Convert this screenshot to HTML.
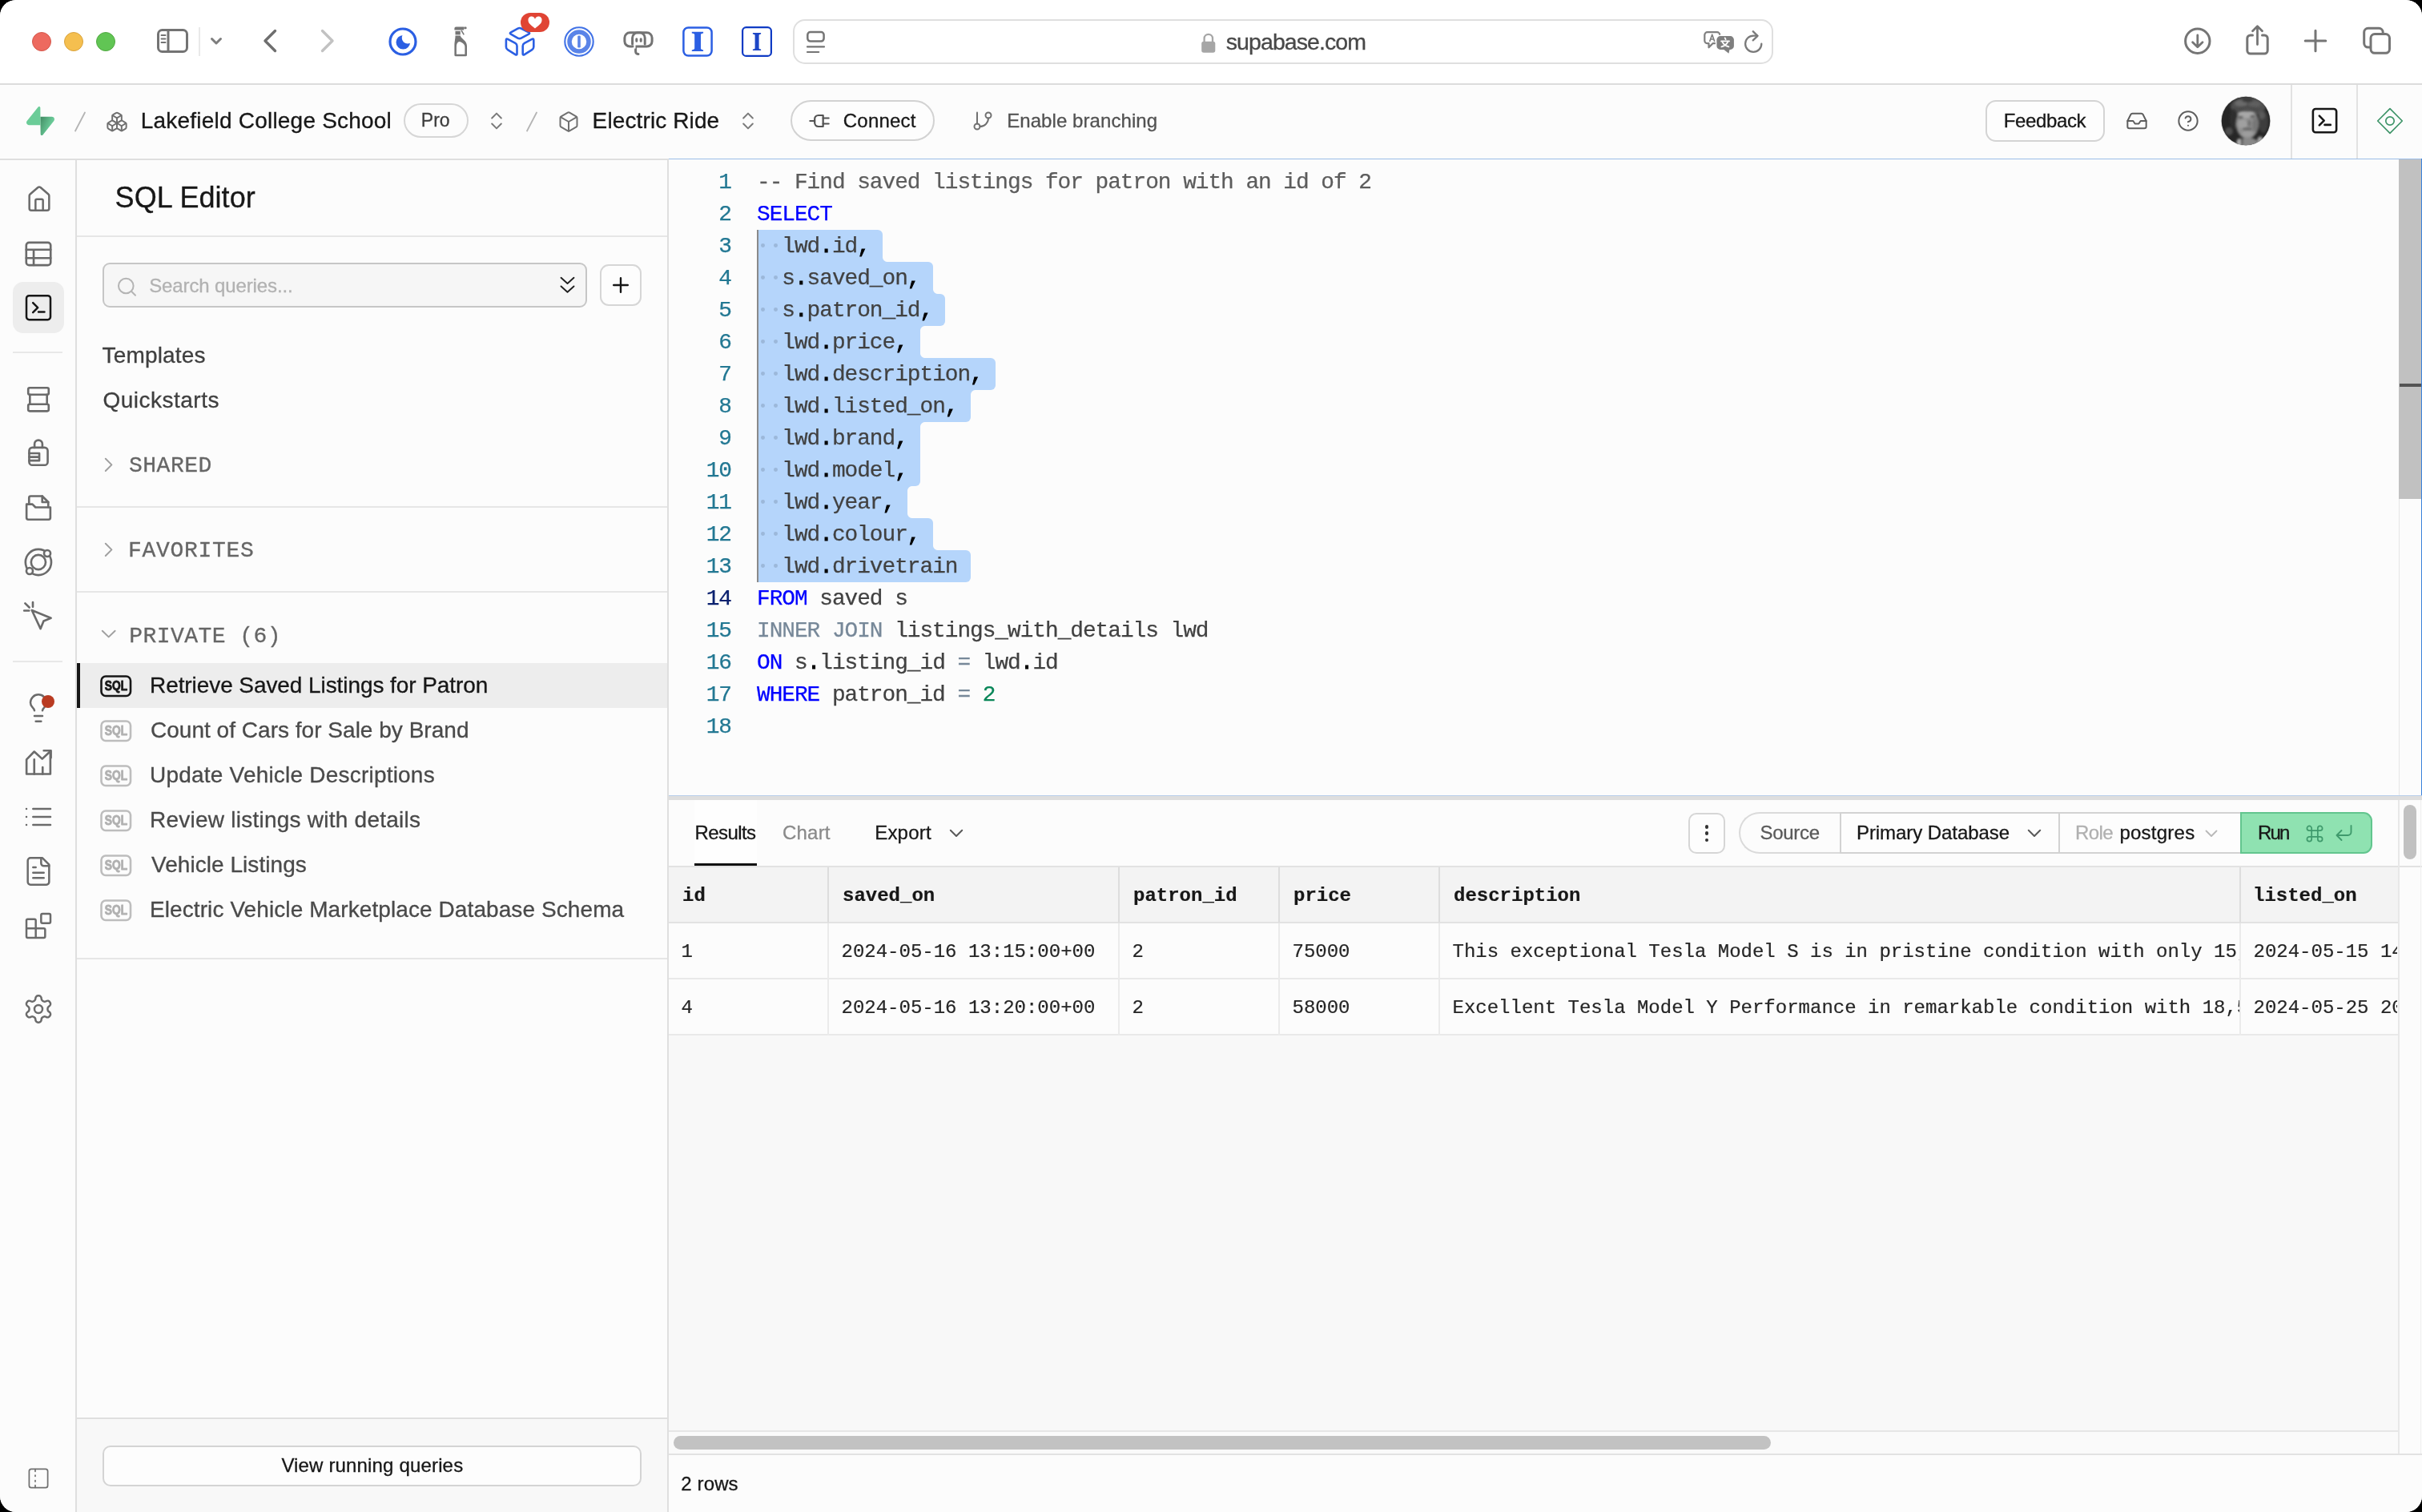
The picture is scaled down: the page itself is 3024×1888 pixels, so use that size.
<!DOCTYPE html>
<html>
<head>
<meta charset="utf-8">
<title>SQL Editor</title>
<style>
*{box-sizing:border-box;margin:0;padding:0}
html,body{width:3024px;height:1888px;overflow:hidden;background:#000;}
body{font-family:"Liberation Sans",sans-serif;color:#171717;-webkit-font-smoothing:antialiased}
#win{position:absolute;left:0;top:0;width:3024px;height:1888px;background:#fcfcfc;border-radius:20px;overflow:hidden;will-change:transform}
.a{position:absolute}
.t{position:absolute;white-space:pre;line-height:1;-webkit-text-stroke:0.3px currentColor}
.m{font-family:"Liberation Mono",monospace}
svg{position:absolute;overflow:visible}
.ic{fill:none;stroke:#6b6b6b;stroke-width:2;stroke-linecap:round;stroke-linejoin:round}
/* safari toolbar */
#sbar{left:0;top:0;width:3024px;height:104px;background:#fff}
#sbarb{left:0;top:104px;width:3024px;height:2px;background:#dcdcdc}
/* app header */
#hdr{left:0;top:106px;width:3024px;height:92px;background:#fcfcfc}
#hdrb{left:0;top:198px;width:3024px;height:2px;background:#dfdfdf}
/* left rail */
#rail{left:0;top:200px;width:94px;height:1688px;background:#fcfcfc}
#railb{left:94px;top:200px;width:2px;height:1688px;background:#dfdfdf}
/* sql panel */
#panel{left:96px;top:200px;width:737px;height:1688px;background:#fcfcfc}
#panelb{left:833px;top:200px;width:2px;height:1688px;background:#dfdfdf}
.hl{position:absolute;left:96px;width:737px;height:2px;background:#e6e6e6}
/* editor */
#ed{left:835px;top:198px;width:2189px;height:798px;background:#fcfcfc}
.ln{position:absolute;left:835px;width:78px;text-align:right;font-family:"Liberation Mono",monospace;font-size:26.1px;line-height:40px;height:40px;color:#237893;white-space:pre}
.cl{position:absolute;left:946px;font-family:"Liberation Mono",monospace;font-size:26.1px;line-height:40px;height:40px;color:#3b3b3b;white-space:pre}
.sel{position:absolute;left:946px;height:40px;background:#b5d5fb}
.kw{color:#0000ff}.cm{color:#5c5c5c}.gr{color:#778899}.nu{color:#098658}.ws{color:#9bb7d9}
/* results */
.th{position:absolute;top:1083px;height:69px;background:#f3f3f3}
.cell{position:absolute;font-family:"Liberation Mono",monospace;font-size:24px;line-height:1;white-space:pre;color:#262626;-webkit-text-stroke:0.2px currentColor}
.hd{font-weight:bold;color:#171717}
.vl{position:absolute;width:2px;background:#e4e4e4}
</style>
</head>
<body>
<div id="win">
<!-- ===== Safari toolbar ===== -->
<div class="a" id="sbar"></div>
<div class="a" id="sbarb"></div>
<div class="a" style="left:40px;top:40px;width:24px;height:24px;border-radius:50%;background:#ed6a5f;border:1px solid #d5584c"></div>
<div class="a" style="left:80px;top:40px;width:24px;height:24px;border-radius:50%;background:#f5bf4f;border:1px solid #d9a33e"></div>
<div class="a" style="left:120px;top:40px;width:24px;height:24px;border-radius:50%;background:#61c554;border:1px solid #51a942"></div>
<!-- sidebar toggle -->
<svg style="left:196px;top:36px" width="39" height="30" viewBox="0 0 39 30"><rect x="1.5" y="1.5" width="36" height="27" rx="5" fill="none" stroke="#737373" stroke-width="3"/><path d="M14 2v26" stroke="#737373" stroke-width="3"/><path d="M5.5 8h5M5.5 12.5h5M5.5 17h5" stroke="#737373" stroke-width="2" stroke-linecap="round"/></svg>
<div class="a" style="left:248px;top:34px;width:2px;height:36px;background:#e9e9e9"></div>
<svg style="left:263px;top:47px" width="14" height="9" viewBox="0 0 14 9"><path d="M1.5 1.5l5.5 5.5l5.5-5.5" fill="none" stroke="#7d7d7d" stroke-width="3" stroke-linecap="round" stroke-linejoin="round"/></svg>
<svg style="left:328px;top:36px" width="18" height="30" viewBox="0 0 18 30"><path d="M15.5 2.5L3 15l12.5 12.5" fill="none" stroke="#6e6e6e" stroke-width="3.4" stroke-linecap="round" stroke-linejoin="round"/></svg>
<svg style="left:400px;top:36px" width="18" height="30" viewBox="0 0 18 30"><path d="M2.5 2.5L15 15L2.5 27.5" fill="none" stroke="#c2c2c2" stroke-width="3.4" stroke-linecap="round" stroke-linejoin="round"/></svg>
<!-- moon ext -->
<svg style="left:485px;top:34px" width="36" height="36" viewBox="0 0 36 36"><defs><mask id="mm"><rect width="36" height="36" fill="#fff"/><circle cx="24" cy="13.400" r="7.200" fill="#000"/></mask></defs><circle cx="18" cy="18" r="16" fill="none" stroke="#2b5fe3" stroke-width="3.200"/><circle cx="18.300" cy="18.700" r="8.800" fill="#2b5fe3" mask="url(#mm)"/></svg>
<!-- spray bottle -->
<svg style="left:566px;top:33px" width="18" height="38" viewBox="0 0 18 38"><g fill="#757575"><path d="M1.400 2.400a2 2 0 0 1 2-2h9.800v4.200H1.400z"/><rect x="13.200" y="0.400" width="3.400" height="2.800" rx="1"/><rect x="2.500" y="5.800" width="6.300" height="4.600"/><path d="M2.500 11.400H8.800C9.600 15.600 17 17.200 17 24.500V35.700a1.500 1.500 0 0 1-1.500 1.500H2.900a1.500 1.500 0 0 1-1.500-1.500V24C1.400 18.500 2.500 16 2.500 11.400z"/></g><path d="M3.900 34.800V25.500C3.900 22 5 20.700 6 19.600C7.300 18.900 8.200 18.900 9.400 19.600C11.500 20.800 14.400 22.200 14.400 25.500V34.800Z" fill="#fff"/><path d="M10 5l3.300 5.400" stroke="#757575" stroke-width="1.500"/></svg>
<!-- cube ext -->
<svg style="left:630px;top:33px" width="38" height="38" viewBox="0 0 38 38"><g fill="none" stroke="#2b5fe3" stroke-width="2.600" stroke-linejoin="round"><path d="M16.50 2.56Q18.60 1.40 20.73 2.51L30.07 7.39Q32.20 8.50 30.08 9.62L20.72 14.58Q18.60 15.70 16.51 14.52L7.89 9.68Q5.80 8.50 7.90 7.34Z"/><path d="M1.90 17.20Q1.90 14.80 4.01 15.94L13.39 20.96Q15.50 22.10 15.50 24.50L15.50 34.00Q15.50 36.40 13.46 35.13L3.94 29.17Q1.90 27.90 1.90 25.50Z"/><path d="M22.70 24.50Q22.70 22.10 24.81 20.96L34.19 15.94Q36.30 14.80 36.30 17.20L36.30 25.50Q36.30 27.90 34.26 29.17L24.74 35.13Q22.70 36.40 22.70 34.00Z"/></g></svg>
<div class="a" style="left:650px;top:16px;width:36px;height:24px;border-radius:12px;background:#e04434"></div>
<svg style="left:659px;top:21px" width="18" height="15" viewBox="0 0 18 15"><path d="M9 14.500C4 10.500 0.500 8 0.500 4.500A4 4 0 0 1 9 3A4 4 0 0 1 17.500 4.500C17.500 8 14 10.500 9 14.500z" fill="#fff"/></svg>
<!-- 1password -->
<svg style="left:704px;top:33px" width="38" height="38" viewBox="0 0 38 38"><circle cx="19" cy="19" r="17.700" fill="none" stroke="#4172e6" stroke-width="2.100"/><circle cx="19" cy="19" r="12" fill="none" stroke="#5a84e8" stroke-width="5.500"/><rect x="17.200" y="11.500" width="3.600" height="15" rx="1.200" fill="#5a84e8"/></svg>
<!-- elephant -->
<svg style="left:778px;top:38px" width="38" height="32" viewBox="0 0 38 32"><g fill="none" stroke="#737373" stroke-width="3" stroke-linecap="round" stroke-linejoin="round"><rect x="1.900" y="2.800" width="34.200" height="17.200" rx="6.500"/><path d="M11.600 17V9.300a6.500 6.500 0 0 1 6.500-6.500h2.600a6.500 6.500 0 0 1 6.500 6.500V17"/><path d="M15.600 20.500v5.700a3.400 3.400 0 0 0 3.400 3.400"/><path d="M16.800 10.800v2.400M22.200 10.800v2.400"/></g><rect x="13.300" y="17.600" width="2.200" height="5" fill="#fff"/><rect x="11.700" y="21.500" width="2.400" height="2" fill="#fff"/></svg>
<!-- I boxes -->
<svg style="left:852px;top:33px" width="38" height="38" viewBox="0 0 38 38"><rect x="1.400" y="1.400" width="35.200" height="35.200" rx="6" fill="none" stroke="#2b5fe3" stroke-width="2.500"/><path d="M11.8 6.8H26.1V8.5Q23.32 8.70 23 10.1V27.8Q23.32 29.20 26.1 29.400000000000002V31.1H11.8V29.400000000000002Q14.88 29.20 15.2 27.8V10.1Q14.88 8.70 11.8 8.5Z" fill="#2b5fe3"/></svg>
<svg style="left:926px;top:33px" width="38" height="38" viewBox="0 0 38 38"><rect x="1.100" y="1.100" width="35.800" height="35.800" rx="4.500" fill="none" stroke="#0f3bc4" stroke-width="2.200"/><path d="M13.9 8.1H24.1V9.5Q21.84 9.70 21.6 10.7V27.400000000000002Q21.84 28.40 24.1 28.6V30H13.9V28.6Q16.36 28.40 16.6 27.400000000000002V10.7Q16.36 9.70 13.9 9.5Z" fill="#1d46c6"/></svg>
<!-- URL bar -->
<div class="a" style="left:990px;top:24px;width:1224px;height:56px;border:2px solid #dfdfdf;border-radius:15px;background:#fff"></div>
<svg style="left:1006px;top:38px" width="25" height="29" viewBox="0 0 25 29"><rect x="2.300" y="2.100" width="20.300" height="11.400" rx="3.400" fill="none" stroke="#757575" stroke-width="2.500"/><path d="M2 20.400h21M2 27h14.200" stroke="#757575" stroke-width="2.200" stroke-linecap="round"/></svg>
<svg style="left:1499px;top:40px" width="20" height="27" viewBox="0 0 20 27"><path d="M4.600 12.500V8a5.200 5.200 0 0 1 10.400 0v4.500" fill="none" stroke="#a6a6a6" stroke-width="2.300"/><rect x="1.200" y="11.700" width="17.100" height="14.100" rx="2.800" fill="#a6a6a6"/></svg>
<span class="t" id="s_url" style="left:1530.8px;top:37.8px;font-size:28.5px;color:#484848;letter-spacing:-0.93px;">supabase.com</span>
<!-- translate -->
<svg style="left:2126px;top:38px" width="40" height="30" viewBox="0 0 40 30"><path d="M12.500 16.200L7.500 21.300V16.200H5.800a3.500 3.500 0 0 1-3.500-3.500V5.700a3.500 3.500 0 0 1 3.500-3.500h12a3.500 3.500 0 0 1 3.500 3.500v7a3.500 3.500 0 0 1-3.500 3.500z" fill="#fff" stroke="#7f7f7f" stroke-width="2.200" stroke-linejoin="round"/><path d="M8.600 14l3.100-8.800l3.100 8.800M9.700 11h4" fill="none" stroke="#7f7f7f" stroke-width="1.700" stroke-linejoin="round"/><path d="M21.900 5.600h12.500a6 6 0 0 1 6 6v7.800a6 6 0 0 1-6 6h-0.500l-1 5l-6-5h-5a6 6 0 0 1-6-6v-7.800a6 6 0 0 1 6-6z" fill="#fff"/><path d="M21.900 7.100h12.500a4.500 4.500 0 0 1 4.500 4.500v7.800a4.500 4.500 0 0 1-4.500 4.500h-0.900l-1.100 4.900l-6-4.900h-4.500a4.500 4.500 0 0 1-4.500-4.500v-7.800a4.500 4.500 0 0 1 4.500-4.500z" fill="#7f7f7f"/><path d="M27.700 9.400l0.900 1.700M23.100 13.400h9.900M24.400 14.400c1.500 3 4.500 5 8 6M31.300 14.400c-1.500 3-4.500 5-7.900 6" fill="none" stroke="#fff" stroke-width="1.800" stroke-linecap="round"/></svg>
<svg style="left:2177px;top:37px" width="26" height="31" viewBox="0 0 26 31"><path d="M22.300 17.700A10.100 10.100 0 1 1 12.200 7.600h5" fill="none" stroke="#7a7a7a" stroke-width="2.300" stroke-linecap="round"/><path d="M11.700 2.200l5.800 5.600l-5.800 5.600" fill="none" stroke="#7a7a7a" stroke-width="2.300" stroke-linecap="round" stroke-linejoin="round"/></svg>
<!-- right icons -->
<svg style="left:2726px;top:34px" width="36" height="36" viewBox="0 0 36 36"><circle cx="17.800" cy="17.300" r="15.200" fill="none" stroke="#757575" stroke-width="3"/><path d="M17.800 10v14.500M11.600 18.800l6.200 6l6.200-6" fill="none" stroke="#757575" stroke-width="2.800" stroke-linecap="round" stroke-linejoin="round"/></svg>
<svg style="left:2803px;top:30px" width="32" height="40" viewBox="0 0 32 40"><path d="M9.500 14H6.800a4 4 0 0 0-4 4v15a4 4 0 0 0 4 4h17.400a4 4 0 0 0 4-4V18a4 4 0 0 0-4-4h-2.700" fill="none" stroke="#757575" stroke-width="3" stroke-linecap="round"/><path d="M15.500 25.500V3.500M9.500 8.800L15.500 2.800l6 6" fill="none" stroke="#757575" stroke-width="2.800" stroke-linecap="round" stroke-linejoin="round"/></svg>
<svg style="left:2877px;top:37px" width="28" height="28" viewBox="0 0 28 28"><path d="M14 1.200v25.600M1.200 14h25.600" stroke="#757575" stroke-width="3" stroke-linecap="round"/></svg>
<svg style="left:2949px;top:32px" width="38" height="38" viewBox="0 0 38 38"><rect x="2.700" y="3.300" width="23.500" height="23.800" rx="5" fill="#fff" stroke="#757575" stroke-width="3"/><rect x="11" y="10.500" width="23.500" height="23.800" rx="5" fill="#fff" stroke="#757575" stroke-width="3"/></svg>


<!-- ===== App header ===== -->
<div class="a" id="hdr"></div>
<div class="a" id="hdrb"></div>
<svg style="left:32.500px;top:132.800px" width="35" height="36.300" viewBox="0 0 109 113"><defs><linearGradient id="lg0" x1="53.974" y1="54.974" x2="94.164" y2="71.830" gradientUnits="userSpaceOnUse"><stop stop-color="#47946a"/><stop offset="1" stop-color="#69c997"/></linearGradient><linearGradient id="lg1" x1="36.156" y1="30.578" x2="54.484" y2="65.081" gradientUnits="userSpaceOnUse"><stop/><stop offset="1" stop-opacity="0"/></linearGradient></defs><path d="M63.708 110.284C60.848 113.885 55.050 111.912 54.981 107.314L53.974 40.063L99.194 40.063C107.384 40.063 111.952 49.523 106.859 55.937L63.708 110.284Z" fill="url(#lg0)"/><path d="M63.708 110.284C60.848 113.885 55.050 111.912 54.981 107.314L53.974 40.063L99.194 40.063C107.384 40.063 111.952 49.523 106.859 55.937L63.708 110.284Z" fill="url(#lg1)" fill-opacity="0.08"/><path d="M45.317 2.071C48.177 -1.530 53.975 0.443 54.043 5.041L54.485 72.292H9.831C1.640 72.292 -2.928 62.832 2.166 56.418L45.317 2.071Z" fill="#6bcc98"/></svg>
<svg style="left:92px;top:139px" width="16" height="26" viewBox="0 0 16 26"><path d="M14 1.500L2 24.500" stroke="#b4b4b4" stroke-width="1.800" stroke-linecap="round"/></svg>
<svg class="ic" style="left:132px;top:138px;stroke:#707070;stroke-width:1.700" width="28" height="28" viewBox="0 0 24 24"><path d="M2.970 12.920A2 2 0 0 0 2 14.630v3.240a2 2 0 0 0 .970 1.710l3 1.800a2 2 0 0 0 2.060 0L12 19v-5.500l-5-3-4.030 2.420Z"/><path d="m7 16.500-4.740-2.850"/><path d="m7 16.500 5-3"/><path d="M7 16.500v5.170"/><path d="M12 13.500V19l3.970 2.380a2 2 0 0 0 2.060 0l3-1.800a2 2 0 0 0 .970-1.710v-3.240a2 2 0 0 0-.970-1.710L17 10.500l-5 3Z"/><path d="m17 16.500-5-3"/><path d="m17 16.500 4.740-2.850"/><path d="M17 16.500v5.170"/><path d="M7.970 4.420A2 2 0 0 0 7 6.130v4.370l5 3 5-3V6.130a2 2 0 0 0-.970-1.710l-3-1.800a2 2 0 0 0-2.060 0l-3 1.800Z"/><path d="M12 8 7.260 5.150"/><path d="m12 8 4.740-2.850"/><path d="M12 13.500V8"/></svg>
<span class="t" id="h_org" style="left:175.8px;top:137.1px;font-size:28px;color:#171717;letter-spacing:0.21px;">Lakefield College School</span>
<div class="a" style="left:504px;top:129px;width:81px;height:43px;border:2px solid #d6d6d6;border-radius:22px;background:#fcfcfc"></div>
<span class="t" id="h_pro" style="left:525.8px;top:139.0px;font-size:23px;color:#3d3d3d;letter-spacing:-0.01px;">Pro</span>
<svg class="ic" style="left:606px;top:137px;stroke:#7a7a7a;stroke-width:1.700" width="28" height="28" viewBox="0 0 24 24"><path d="m7 15 5 5 5-5"/><path d="m7 9 5-5 5 5"/></svg>
<svg style="left:656px;top:139px" width="16" height="26" viewBox="0 0 16 26"><path d="M14 1.500L2 24.500" stroke="#b4b4b4" stroke-width="1.800" stroke-linecap="round"/></svg>
<svg class="ic" style="left:696px;top:138px;stroke:#707070;stroke-width:1.700" width="28" height="28" viewBox="0 0 24 24"><path d="M21 8a2 2 0 0 0-1-1.730l-7-4a2 2 0 0 0-2 0l-7 4A2 2 0 0 0 3 8v8a2 2 0 0 0 1 1.730l7 4a2 2 0 0 0 2 0l7-4A2 2 0 0 0 21 16Z"/><path d="m3.300 7 8.700 5 8.700-5"/><path d="M12 22V12"/></svg>
<span class="t" id="h_proj" style="left:739.6px;top:137.0px;font-size:28px;color:#171717;letter-spacing:0.12px;">Electric Ride</span>
<svg class="ic" style="left:920px;top:137px;stroke:#7a7a7a;stroke-width:1.700" width="28" height="28" viewBox="0 0 24 24"><path d="m7 15 5 5 5-5"/><path d="m7 9 5-5 5 5"/></svg>
<div class="a" style="left:987px;top:125px;width:180px;height:51px;border:2px solid #d2d2d2;border-radius:26px;background:#fdfdfd"></div>
<svg class="ic" style="left:1009px;top:137px;stroke:#525252;stroke-width:1.900" width="28" height="28" viewBox="0 0 24 24"><g transform="rotate(90 12 12)"><path d="M12 22v-5"/><path d="M9 8V2"/><path d="M15 8V2"/><path d="M18 8v5a4 4 0 0 1-4 4h-4a4 4 0 0 1-4-4V8Z"/></g></svg>
<span class="t" id="h_connect" style="left:1052.8px;top:139.1px;font-size:24px;color:#171717;letter-spacing:0.22px;">Connect</span>
<svg class="ic" style="left:1213px;top:137px;stroke:#707070;stroke-width:1.700" width="28" height="28" viewBox="0 0 24 24"><line x1="6" x2="6" y1="3" y2="15"/><circle cx="18" cy="6" r="3"/><circle cx="6" cy="18" r="3"/><path d="M18 9a9 9 0 0 1-9 9"/></svg>
<span class="t" id="h_branch" style="left:1257.2px;top:139.1px;font-size:24px;color:#525252;letter-spacing:0.07px;">Enable branching</span>
<div class="a" style="left:2479px;top:125px;width:149px;height:52px;border:2px solid #d4d4d4;border-radius:13px;background:#fdfdfd"></div>
<span class="t" id="h_feedback" style="left:2501.8px;top:138.7px;font-size:24px;color:#171717;letter-spacing:-0.37px;">Feedback</span>
<svg class="ic" style="left:2654px;top:137px;stroke:#5e5e5e;stroke-width:1.700" width="28" height="28" viewBox="0 0 24 24"><polyline points="22 12 16 12 14 15 10 15 8 12 2 12"/><path d="M5.450 5.110 2 12v6a2 2 0 0 0 2 2h16a2 2 0 0 0 2-2v-6l-3.450-6.890A2 2 0 0 0 16.760 4H7.240a2 2 0 0 0-1.790 1.110z"/></svg>
<svg class="ic" style="left:2718px;top:137px;stroke:#5e5e5e;stroke-width:1.700" width="28" height="28" viewBox="0 0 24 24"><circle cx="12" cy="12" r="10"/><path d="M9.090 9a3 3 0 0 1 5.830 1c0 2-3 3-3 3"/><path d="M12 17h.010"/></svg>
<svg style="left:2772px;top:119px" width="64" height="64" viewBox="-1 -1 64 64"><defs><clipPath id="avc"><circle cx="31" cy="31" r="30.300"/></clipPath><filter id="avb" x="-20%" y="-20%" width="140%" height="140%"><feGaussianBlur stdDeviation="1.500"/></filter></defs><circle cx="31" cy="31" r="31.200" fill="#dcdcdc"/><g clip-path="url(#avc)"><rect x="-1" y="-1" width="64" height="64" fill="#262626"/><g filter="url(#avb)"><ellipse cx="34" cy="13" rx="22" ry="12" fill="#4f4f4f"/><ellipse cx="25" cy="9" rx="8" ry="4" fill="#6a6a6a"/><ellipse cx="42" cy="10" rx="8" ry="4" fill="#5e5e5e"/><ellipse cx="33" cy="5" rx="7" ry="3" fill="#3a3a3a"/><ellipse cx="16" cy="28" rx="5" ry="12" fill="#2f2f2f"/><ellipse cx="53" cy="32" rx="6" ry="14" fill="#3c3c3c"/><ellipse cx="51" cy="24" rx="4" ry="5" fill="#5a5a5a"/><ellipse cx="10" cy="44" rx="5" ry="5" fill="#4e4e4e"/><ellipse cx="33" cy="35" rx="14" ry="18.500" fill="#8f8f8f"/><ellipse cx="31" cy="23" rx="10" ry="4.500" fill="#a8a8a8"/><ellipse cx="27" cy="35" rx="6" ry="6" fill="#a0a0a0"/><ellipse cx="43" cy="36" rx="4" ry="9" fill="#777"/><ellipse cx="33" cy="47" rx="7" ry="4" fill="#9d9d9d"/><ellipse cx="34" cy="58" rx="12" ry="6" fill="#888"/><ellipse cx="23" cy="58" rx="3.500" ry="5" fill="#b4b4b4"/><ellipse cx="49" cy="55" rx="3.500" ry="4.500" fill="#a8a8a8"/><ellipse cx="26" cy="57" rx="1.200" ry="5" fill="#3a3a3a"/></g><g filter="url(#avb)" opacity="0.900"><ellipse cx="24.500" cy="26.500" rx="3.200" ry="1.300" fill="#4a4a4a"/><ellipse cx="39.500" cy="25.500" rx="3.200" ry="1.300" fill="#4a4a4a"/><ellipse cx="35.500" cy="34" rx="1.800" ry="4" fill="#6c6c6c"/><ellipse cx="33" cy="41" rx="6.500" ry="1.300" fill="#555"/><ellipse cx="33" cy="16.500" rx="13" ry="2.500" fill="#4a4a4a"/></g></g></svg>
<div class="a" style="left:2860px;top:106px;width:2px;height:92px;background:#e2e2e2"></div>
<svg class="ic" style="left:2882.600px;top:131.400px;stroke:#171717;stroke-width:1.600" width="39" height="39" viewBox="0 0 24 24"><path d="M7.898 8.434L11.500 12.036L7.898 15.638M12 15.329H16.500M5 21.106H19C20.105 21.106 21 20.210 21 19.106V5.105C21 4.001 20.105 3.105 19 3.105H5C3.895 3.105 3 4.001 3 5.105V19.106C3 20.210 3.895 21.106 5 21.106Z"/></svg>
<div class="a" style="left:2942px;top:106px;width:2px;height:92px;background:#e2e2e2"></div>
<svg style="left:2966px;top:133px" width="36" height="36" viewBox="0 0 36 36"><path d="M18 2.700L33.300 18L18 33.300L2.700 18Z" fill="none" stroke="#3f9569" stroke-width="1.700" stroke-linejoin="round"/><circle cx="18" cy="18" r="5.200" fill="none" stroke="#3f9569" stroke-width="1.700"/></svg>


<!-- ===== Left rail ===== -->
<div class="a" id="rail"></div>
<div class="a" id="railb"></div>
<div class="a" style="left:16px;top:352px;width:64px;height:64px;border-radius:13px;background:#ededed"></div>
<div class="a" style="left:16px;top:439px;width:62px;height:2px;background:#e8e8e8"></div>
<div class="a" style="left:16px;top:825px;width:62px;height:2px;background:#e8e8e8"></div>

<svg class="ic" style="left:28px;top:228px;stroke-width:1.500" width="40" height="40" viewBox="0 0 24 24"><path d="M5.200 9.900a1.500 1.500 0 0 1 .560-1.170l5.900-5.100a1.500 1.500 0 0 1 1.880 0l5.900 5.100a1.500 1.500 0 0 1 .560 1.170V19.300a1.500 1.500 0 0 1-1.500 1.500H6.700a1.500 1.500 0 0 1-1.500-1.500z"/><path d="M9.800 20.800v-7.400a1 1 0 0 1 1-1h3.600a1 1 0 0 1 1 1v7.400"/></svg>
<svg class="ic" style="left:27px;top:296px;stroke-width:1.500" width="42" height="42" viewBox="0 0 24 24"><rect x="3.300" y="3.900" width="17.400" height="16.200" rx="2"/><path d="M3.300 9h17.400M3.300 15h17.400M8.600 9v11"/></svg>
<svg class="ic" style="left:28px;top:364px;stroke-width:1.500;stroke:#171717" width="40" height="40" viewBox="0 0 24 24"><path d="M7.898 8.434L11.500 12.036L7.898 15.638M12 15.329H16.500M5 21.106H19C20.105 21.106 21 20.210 21 19.106V5.105C21 4.001 20.105 3.105 19 3.105H5C3.895 3.105 3 4.001 3 5.105V19.106C3 20.210 3.895 21.106 5 21.106Z"/></svg>
<svg class="ic" style="left:27px;top:478px;stroke-width:1.500" width="42" height="42" viewBox="0 0 24 24"><rect x="4.700" y="3.600" width="14.600" height="4.800" rx="1"/><rect x="4.700" y="15.300" width="14.600" height="4.900" rx="1"/><path d="M5.900 8.400v6.900M18.100 8.400v6.900"/></svg>
<svg class="ic" style="left:27px;top:544px;stroke-width:1.500" width="42" height="42" viewBox="0 0 24 24"><rect x="5.400" y="8.500" width="13.200" height="12.500" rx="2.200"/><path d="M9.200 8.500V6a2.800 2.800 0 0 1 5.600 0v2.500"/><path d="M5.400 12.600h7.200v5.200H5.400M5.400 15.200h7.200"/></svg>
<svg class="ic" style="left:27px;top:613px;stroke-width:1.500" width="42" height="42" viewBox="0 0 24 24"><path d="M3.500 9.500h4.200l2.200 2.200h10.600v7.500a1.200 1.200 0 0 1-1.200 1.200H4.700a1.200 1.200 0 0 1-1.200-1.200z"/><path d="M5.300 9.500V4.900a1.200 1.200 0 0 1 1.200-1.200h8.200l4.300 4.300v3.500"/><path d="M14.700 3.700v4.300H19"/></svg>
<svg class="ic" style="left:27px;top:681px;stroke-width:1.500" width="42" height="42" viewBox="0 0 24 24"><circle cx="11.950" cy="12" r="9.200"/><circle cx="11.950" cy="12" r="5.200"/><circle cx="18.300" cy="5.700" r="2.300" fill="#fcfcfc"/><circle cx="5.700" cy="18.300" r="2.300" fill="#fcfcfc"/></svg>
<svg class="ic" style="left:27px;top:748px;stroke-width:1.500" width="42" height="42" viewBox="0 0 24 24"><path d="M7.300 8 20.900 13.600 15.700 15.700 13.500 21.200Z"/><path d="M8 2.300V5.500M1.800 8.300H5.300M2.500 3.100 5.500 6"/></svg>
<svg class="ic" style="left:28px;top:864px;stroke-width:1.500" width="40" height="40" viewBox="0 0 24 24"><path d="M15 14c.2-1 .7-1.700 1.500-2.500 1-.900 1.500-2.200 1.500-3.500A6 6 0 0 0 6 8c0 1 .2 2.200 1.500 3.500.7.700 1.300 1.500 1.500 2.500"/><path d="M9 18h6"/><path d="M10 22h4"/></svg>
<div class="a" style="left:52px;top:868px;width:16px;height:16px;border-radius:50%;background:#b93b22"></div>
<svg class="ic" style="left:27px;top:931px;stroke-width:1.500" width="42" height="42" viewBox="0 0 24 24"><path d="M3.500 9.900 9 4.300 14.700 9.500 20.500 4V20.300H3.500z"/><path d="M15.800 3.600h5.100v5.100M9 9.900v10.400M15 15.400v4.900"/></svg>
<svg class="ic" style="left:28px;top:1000px;stroke-width:1.500" width="40" height="40" viewBox="0 0 24 24"><path d="M3 12h.010"/><path d="M3 18h.010"/><path d="M3 6h.010"/><path d="M8 12h13"/><path d="M8 18h13"/><path d="M8 6h13"/></svg>
<svg class="ic" style="left:28px;top:1068px;stroke-width:1.500" width="40" height="40" viewBox="0 0 24 24"><path d="M15 2H6a2 2 0 0 0-2 2v16a2 2 0 0 0 2 2h12a2 2 0 0 0 2-2V7Z"/><path d="M14 2v4a2 2 0 0 0 2 2h4"/><path d="M10 9H8"/><path d="M16 13H8"/><path d="M16 17H8"/></svg>
<svg class="ic" style="left:28px;top:1136px;stroke-width:1.500" width="40" height="40" viewBox="0 0 24 24"><rect width="7" height="7" x="14" y="3" rx="1"/><path d="M10 21V8a1 1 0 0 0-1-1H4a1 1 0 0 0-1 1v12a1 1 0 0 0 1 1h12a1 1 0 0 0 1-1v-5a1 1 0 0 0-1-1H3"/></svg>
<svg class="ic" style="left:28px;top:1240px;stroke-width:1.500" width="40" height="40" viewBox="0 0 24 24"><path d="M12.220 2h-.44a2 2 0 0 0-2 2v.18a2 2 0 0 1-1 1.730l-.43.25a2 2 0 0 1-2 0l-.15-.08a2 2 0 0 0-2.730.73l-.22.38a2 2 0 0 0 .73 2.730l.15.100a2 2 0 0 1 1 1.720v.51a2 2 0 0 1-1 1.740l-.15.09a2 2 0 0 0-.73 2.730l.22.38a2 2 0 0 0 2.730.73l.15-.08a2 2 0 0 1 2 0l.43.25a2 2 0 0 1 1 1.730V20a2 2 0 0 0 2 2h.44a2 2 0 0 0 2-2v-.18a2 2 0 0 1 1-1.730l.43-.25a2 2 0 0 1 2 0l.15.08a2 2 0 0 0 2.730-.73l.22-.39a2 2 0 0 0-.73-2.730l-.15-.08a2 2 0 0 1-1-1.740v-.50a2 2 0 0 1 1-1.740l.15-.09a2 2 0 0 0 .73-2.730l-.22-.38a2 2 0 0 0-2.730-.73l-.15.08a2 2 0 0 1-2 0l-.43-.25a2 2 0 0 1-1-1.730V4a2 2 0 0 0-2-2z"/><circle cx="12" cy="12" r="3"/></svg>
<svg class="ic" style="left:32px;top:1830px;stroke-width:1.300;stroke:#707070" width="32" height="32" viewBox="0 0 24 24"><rect width="17.400" height="17.400" x="3.300" y="3.300" rx="2"/><path d="M9 14v1"/><path d="M9 18.500v2"/><path d="M9 3.500v2"/><path d="M9 9v1"/></svg>



<!-- ===== SQL panel ===== -->
<div class="a" id="panel"></div>
<div class="a" id="panelb"></div>
<span class="t" id="p_title" style="left:143.6px;top:228.7px;font-size:36px;color:#171717;letter-spacing:0.04px;">SQL Editor</span>
<div class="hl" style="top:294px"></div>
<div class="a" style="left:128px;top:328px;width:605px;height:56px;border:2px solid #c6c6c6;border-radius:9px;background:#f6f6f6"></div>
<svg style="left:146px;top:346px" width="25" height="25" viewBox="0 0 25 25"><circle cx="11.3" cy="11" r="9.3" fill="none" stroke="#b4b4b4" stroke-width="2"/><path d="M18 17.800l5 5" stroke="#b4b4b4" stroke-width="2" stroke-linecap="round"/></svg>
<span class="t" id="p_search" style="left:186.2px;top:344.8px;font-size:24px;color:#b2b2b2;letter-spacing:-0.12px;">Search queries...</span>
<svg style="left:699px;top:345px" width="19" height="22" viewBox="0 0 19 22"><path d="M1.500 1.800l8 7.200l8-7.200M1.500 12.500l8 7.200l8-7.200" fill="none" stroke="#1f1f1f" stroke-width="1.900" stroke-linecap="round" stroke-linejoin="round"/></svg>
<div class="a" style="left:749px;top:330px;width:52px;height:52px;border:2px solid #d6d6d6;border-radius:11px;background:#fdfdfd"></div>
<svg style="left:765px;top:346px" width="20" height="20" viewBox="0 0 20 20"><path d="M10 1.200v17.600M1.200 10h17.600" stroke="#171717" stroke-width="2.400" stroke-linecap="round"/></svg>
<span class="t" id="p_tmpl" style="left:127.6px;top:430.3px;font-size:28px;color:#3f3f3f;letter-spacing:0.15px;">Templates</span>
<span class="t" id="p_quick" style="left:128.4px;top:485.9px;font-size:28px;color:#3f3f3f;letter-spacing:0.50px;">Quickstarts</span>
<svg style="left:130px;top:570.5px" width="12" height="20" viewBox="0 0 12 20"><path d="M1.800 1.800l7.600 7.600l-7.600 7.600" fill="none" stroke="#a0a0a0" stroke-width="2" stroke-linecap="round" stroke-linejoin="round"/></svg>
<span class="t m" id="p_shared" style="left:161.0px;top:568.3px;font-size:28px;color:#666666;letter-spacing:0.50px;">SHARED</span>
<div class="hl" style="top:632px"></div>
<svg style="left:130px;top:676.5px" width="12" height="20" viewBox="0 0 12 20"><path d="M1.800 1.800l7.600 7.600l-7.600 7.600" fill="none" stroke="#a0a0a0" stroke-width="2" stroke-linecap="round" stroke-linejoin="round"/></svg>
<span class="t m" id="p_fav" style="left:160.0px;top:674.4px;font-size:28px;color:#666666;letter-spacing:0.70px;">FAVORITES</span>
<div class="hl" style="top:738px"></div>
<svg style="left:126px;top:786px" width="20" height="12" viewBox="0 0 20 12"><path d="M1.800 1.800l7.900 7.600l7.900-7.600" fill="none" stroke="#a0a0a0" stroke-width="2" stroke-linecap="round" stroke-linejoin="round"/></svg>
<span class="t m" id="p_priv" style="left:161.2px;top:780.5px;font-size:28px;color:#666666;letter-spacing:0.46px;">PRIVATE (6)</span>
<div class="a" style="left:96px;top:828px;width:737px;height:56px;background:#ededed"></div>
<div class="a" style="left:96px;top:828px;width:4px;height:56px;background:#171717"></div>
<svg style="left:125px;top:843px" width="40" height="28" viewBox="0 0 40 28"><rect x="1.5" y="1.5" width="36.5" height="24.5" rx="5.5" fill="none" stroke="#171717" stroke-width="2.6"/><text transform="translate(5.800 19.400) scale(0.810 1)" font-family="Liberation Sans" font-weight="700" font-size="17" fill="#171717" stroke="#171717" stroke-width="0.900" stroke-linejoin="round" style="font-weight:700">SQL</text></svg>
<span class="t" id="p_row0" style="left:187.0px;top:841.8px;font-size:28px;color:#171717;letter-spacing:-0.08px;">Retrieve Saved Listings for Patron</span>
<svg style="left:125px;top:899px" width="40" height="28" viewBox="0 0 40 28"><rect x="1.5" y="1.5" width="36.5" height="24.5" rx="5.5" fill="none" stroke="#bdbdbd" stroke-width="2.6"/><text transform="translate(5.800 19.400) scale(0.810 1)" font-family="Liberation Sans" font-weight="700" font-size="17" fill="#b0b0b0" stroke="#b0b0b0" stroke-width="0.900" stroke-linejoin="round" style="font-weight:700">SQL</text></svg>
<span class="t" id="p_row1" style="left:188.0px;top:897.8px;font-size:28px;color:#4a4a4a;letter-spacing:0.02px;">Count of Cars for Sale by Brand</span>
<svg style="left:125px;top:955px" width="40" height="28" viewBox="0 0 40 28"><rect x="1.5" y="1.5" width="36.5" height="24.5" rx="5.5" fill="none" stroke="#bdbdbd" stroke-width="2.6"/><text transform="translate(5.800 19.400) scale(0.810 1)" font-family="Liberation Sans" font-weight="700" font-size="17" fill="#b0b0b0" stroke="#b0b0b0" stroke-width="0.900" stroke-linejoin="round" style="font-weight:700">SQL</text></svg>
<span class="t" id="p_row2" style="left:187.0px;top:953.8px;font-size:28px;color:#4a4a4a;letter-spacing:0.21px;">Update Vehicle Descriptions</span>
<svg style="left:125px;top:1011px" width="40" height="28" viewBox="0 0 40 28"><rect x="1.5" y="1.5" width="36.5" height="24.5" rx="5.5" fill="none" stroke="#bdbdbd" stroke-width="2.6"/><text transform="translate(5.800 19.400) scale(0.810 1)" font-family="Liberation Sans" font-weight="700" font-size="17" fill="#b0b0b0" stroke="#b0b0b0" stroke-width="0.900" stroke-linejoin="round" style="font-weight:700">SQL</text></svg>
<span class="t" id="p_row3" style="left:187.0px;top:1009.8px;font-size:28px;color:#4a4a4a;letter-spacing:0.24px;">Review listings with details</span>
<svg style="left:125px;top:1067px" width="40" height="28" viewBox="0 0 40 28"><rect x="1.5" y="1.5" width="36.5" height="24.5" rx="5.5" fill="none" stroke="#bdbdbd" stroke-width="2.6"/><text transform="translate(5.800 19.400) scale(0.810 1)" font-family="Liberation Sans" font-weight="700" font-size="17" fill="#b0b0b0" stroke="#b0b0b0" stroke-width="0.900" stroke-linejoin="round" style="font-weight:700">SQL</text></svg>
<span class="t" id="p_row4" style="left:189.0px;top:1065.8px;font-size:28px;color:#4a4a4a;letter-spacing:0.05px;">Vehicle Listings</span>
<svg style="left:125px;top:1123px" width="40" height="28" viewBox="0 0 40 28"><rect x="1.5" y="1.5" width="36.5" height="24.5" rx="5.5" fill="none" stroke="#bdbdbd" stroke-width="2.6"/><text transform="translate(5.800 19.400) scale(0.810 1)" font-family="Liberation Sans" font-weight="700" font-size="17" fill="#b0b0b0" stroke="#b0b0b0" stroke-width="0.900" stroke-linejoin="round" style="font-weight:700">SQL</text></svg>
<span class="t" id="p_row5" style="left:187.0px;top:1121.8px;font-size:28px;color:#4a4a4a;letter-spacing:0.09px;">Electric Vehicle Marketplace Database Schema</span>
<div class="hl" style="top:1196px"></div>
<div class="a" style="left:96px;top:1771px;width:737px;height:117px;background:#f8f8f8"></div>
<div class="hl" style="top:1770px;background:#dfdfdf"></div>
<div class="a" style="left:128px;top:1804.5px;width:673px;height:51px;border:2px solid #d4d4d4;border-radius:10px;background:#fdfdfd"></div>
<span class="t" id="p_view" style="left:351.4px;top:1817.7px;font-size:24px;color:#171717;letter-spacing:0.16px;">View running queries</span>

<!-- ===== Editor ===== -->
<div class="a" id="ed"></div>
<style>.ln,.cl{font-size:27.8px;letter-spacing:-1.030px;line-height:41px}.cl{left:945px;color:#414141}.sel{left:947px}.dl{color:#000;-webkit-text-stroke:0.9px #000}.cl,.ln{-webkit-text-stroke:0.25px currentColor}</style>
<div class="a" style="left:835px;top:198px;width:2189px;height:1px;background:#9bbde8"></div>
<div class="a" style="left:3023px;top:198px;width:1px;height:796px;background:#3b82dc"></div>
<div class="a" style="left:835px;top:993px;width:2189px;height:1px;background:#b7cdea"></div>
<div class="a" style="left:2995px;top:199px;width:1px;height:794px;background:#e6e6e6"></div>
<div class="a" style="left:2995px;top:199px;width:28px;height:424px;background:#c1c1c1"></div>
<div class="a" style="left:2996px;top:479px;width:27px;height:4px;background:#545454"></div>
<div class="sel" style="top:287px;width:155.0px;border-radius:0 6px 0px 0"></div>
<div class="a" style="left:1102.0px;top:321px;width:6px;height:6px;background:radial-gradient(circle at 100% 0,rgba(181,213,251,0) 5.5px,#b5d5fb 6.5px)"></div>
<div class="sel" style="top:327px;width:217.6px;border-radius:0 6px 0px 0"></div>
<div class="a" style="left:1164.6px;top:361px;width:6px;height:6px;background:radial-gradient(circle at 100% 0,rgba(181,213,251,0) 5.5px,#b5d5fb 6.5px)"></div>
<div class="sel" style="top:367px;width:233.2px;border-radius:0 6px 6px 0"></div>
<div class="sel" style="top:407px;width:202.0px;border-radius:0 0px 0px 0"></div>
<div class="a" style="left:1149.0px;top:441px;width:6px;height:6px;background:radial-gradient(circle at 100% 0,rgba(181,213,251,0) 5.5px,#b5d5fb 6.5px)"></div>
<div class="a" style="left:1149.0px;top:407px;width:6px;height:6px;background:radial-gradient(circle at 100% 100%,rgba(181,213,251,0) 5.5px,#b5d5fb 6.5px)"></div>
<div class="sel" style="top:447px;width:295.9px;border-radius:0 6px 6px 0"></div>
<div class="sel" style="top:487px;width:264.6px;border-radius:0 0px 6px 0"></div>
<div class="a" style="left:1211.5px;top:487px;width:6px;height:6px;background:radial-gradient(circle at 100% 100%,rgba(181,213,251,0) 5.5px,#b5d5fb 6.5px)"></div>
<div class="sel" style="top:527px;width:202.0px;border-radius:0 0px 0px 0"></div>
<div class="a" style="left:1149.0px;top:527px;width:6px;height:6px;background:radial-gradient(circle at 100% 100%,rgba(181,213,251,0) 5.5px,#b5d5fb 6.5px)"></div>
<div class="sel" style="top:567px;width:202.0px;border-radius:0 0px 6px 0"></div>
<div class="sel" style="top:607px;width:186.3px;border-radius:0 0px 0px 0"></div>
<div class="a" style="left:1133.3px;top:641px;width:6px;height:6px;background:radial-gradient(circle at 100% 0,rgba(181,213,251,0) 5.5px,#b5d5fb 6.5px)"></div>
<div class="a" style="left:1133.3px;top:607px;width:6px;height:6px;background:radial-gradient(circle at 100% 100%,rgba(181,213,251,0) 5.5px,#b5d5fb 6.5px)"></div>
<div class="sel" style="top:647px;width:217.6px;border-radius:0 6px 0px 0"></div>
<div class="a" style="left:1164.6px;top:681px;width:6px;height:6px;background:radial-gradient(circle at 100% 0,rgba(181,213,251,0) 5.5px,#b5d5fb 6.5px)"></div>
<div class="sel" style="top:687px;width:264.6px;border-radius:0 6px 6px 0"></div>
<div class="a" style="left:950.4px;top:304.3px;width:4.8px;height:4.8px;border-radius:50%;background:#9cb8da"></div>
<div class="a" style="left:966.1px;top:304.3px;width:4.8px;height:4.8px;border-radius:50%;background:#9cb8da"></div>
<div class="a" style="left:950.4px;top:344.3px;width:4.8px;height:4.8px;border-radius:50%;background:#9cb8da"></div>
<div class="a" style="left:966.1px;top:344.3px;width:4.8px;height:4.8px;border-radius:50%;background:#9cb8da"></div>
<div class="a" style="left:950.4px;top:384.3px;width:4.8px;height:4.8px;border-radius:50%;background:#9cb8da"></div>
<div class="a" style="left:966.1px;top:384.3px;width:4.8px;height:4.8px;border-radius:50%;background:#9cb8da"></div>
<div class="a" style="left:950.4px;top:424.3px;width:4.8px;height:4.8px;border-radius:50%;background:#9cb8da"></div>
<div class="a" style="left:966.1px;top:424.3px;width:4.8px;height:4.8px;border-radius:50%;background:#9cb8da"></div>
<div class="a" style="left:950.4px;top:464.3px;width:4.8px;height:4.8px;border-radius:50%;background:#9cb8da"></div>
<div class="a" style="left:966.1px;top:464.3px;width:4.8px;height:4.8px;border-radius:50%;background:#9cb8da"></div>
<div class="a" style="left:950.4px;top:504.3px;width:4.8px;height:4.8px;border-radius:50%;background:#9cb8da"></div>
<div class="a" style="left:966.1px;top:504.3px;width:4.8px;height:4.8px;border-radius:50%;background:#9cb8da"></div>
<div class="a" style="left:950.4px;top:544.3px;width:4.8px;height:4.8px;border-radius:50%;background:#9cb8da"></div>
<div class="a" style="left:966.1px;top:544.3px;width:4.8px;height:4.8px;border-radius:50%;background:#9cb8da"></div>
<div class="a" style="left:950.4px;top:584.3px;width:4.8px;height:4.8px;border-radius:50%;background:#9cb8da"></div>
<div class="a" style="left:966.1px;top:584.3px;width:4.8px;height:4.8px;border-radius:50%;background:#9cb8da"></div>
<div class="a" style="left:950.4px;top:624.3px;width:4.8px;height:4.8px;border-radius:50%;background:#9cb8da"></div>
<div class="a" style="left:966.1px;top:624.3px;width:4.8px;height:4.8px;border-radius:50%;background:#9cb8da"></div>
<div class="a" style="left:950.4px;top:664.3px;width:4.8px;height:4.8px;border-radius:50%;background:#9cb8da"></div>
<div class="a" style="left:966.1px;top:664.3px;width:4.8px;height:4.8px;border-radius:50%;background:#9cb8da"></div>
<div class="a" style="left:950.4px;top:704.3px;width:4.8px;height:4.8px;border-radius:50%;background:#9cb8da"></div>
<div class="a" style="left:966.1px;top:704.3px;width:4.8px;height:4.8px;border-radius:50%;background:#9cb8da"></div>
<div class="a" style="left:945px;top:287px;width:2px;height:440px;background:#8a8a8a"></div>
<div class="ln" style="top:207px;color:#237893">1</div>
<div class="cl" id="cl1" style="top:207px"><span class="cm">-- Find saved listings for patron with an id of 2</span></div>
<div class="ln" style="top:247px;color:#237893">2</div>
<div class="cl" id="cl2" style="top:247px"><span class="kw">SELECT</span></div>
<div class="ln" style="top:287px;color:#237893">3</div>
<div class="cl" id="cl3" style="top:287px">  lwd<span class="dl">.</span>id<span class="dl">,</span></div>
<div class="ln" style="top:327px;color:#237893">4</div>
<div class="cl" id="cl4" style="top:327px">  s<span class="dl">.</span>saved_on<span class="dl">,</span></div>
<div class="ln" style="top:367px;color:#237893">5</div>
<div class="cl" id="cl5" style="top:367px">  s<span class="dl">.</span>patron_id<span class="dl">,</span></div>
<div class="ln" style="top:407px;color:#237893">6</div>
<div class="cl" id="cl6" style="top:407px">  lwd<span class="dl">.</span>price<span class="dl">,</span></div>
<div class="ln" style="top:447px;color:#237893">7</div>
<div class="cl" id="cl7" style="top:447px">  lwd<span class="dl">.</span>description<span class="dl">,</span></div>
<div class="ln" style="top:487px;color:#237893">8</div>
<div class="cl" id="cl8" style="top:487px">  lwd<span class="dl">.</span>listed_on<span class="dl">,</span></div>
<div class="ln" style="top:527px;color:#237893">9</div>
<div class="cl" id="cl9" style="top:527px">  lwd<span class="dl">.</span>brand<span class="dl">,</span></div>
<div class="ln" style="top:567px;color:#237893">10</div>
<div class="cl" id="cl10" style="top:567px">  lwd<span class="dl">.</span>model<span class="dl">,</span></div>
<div class="ln" style="top:607px;color:#237893">11</div>
<div class="cl" id="cl11" style="top:607px">  lwd<span class="dl">.</span>year<span class="dl">,</span></div>
<div class="ln" style="top:647px;color:#237893">12</div>
<div class="cl" id="cl12" style="top:647px">  lwd<span class="dl">.</span>colour<span class="dl">,</span></div>
<div class="ln" style="top:687px;color:#237893">13</div>
<div class="cl" id="cl13" style="top:687px">  lwd<span class="dl">.</span>drivetrain</div>
<div class="ln" style="top:727px;color:#0b216f">14</div>
<div class="cl" id="cl14" style="top:727px"><span class="kw">FROM</span> saved s</div>
<div class="ln" style="top:767px;color:#237893">15</div>
<div class="cl" id="cl15" style="top:767px"><span class="gr">INNER JOIN</span> listings_with_details lwd</div>
<div class="ln" style="top:807px;color:#237893">16</div>
<div class="cl" id="cl16" style="top:807px"><span class="kw">ON</span> s<span class="dl">.</span>listing_id <span class="gr">=</span> lwd<span class="dl">.</span>id</div>
<div class="ln" style="top:847px;color:#237893">17</div>
<div class="cl" id="cl17" style="top:847px"><span class="kw">WHERE</span> patron_id <span class="gr">=</span> <span class="nu">2</span></div>
<div class="ln" style="top:887px;color:#237893">18</div>

<!-- ===== Results ===== -->
<div class="a" style="left:835px;top:994px;width:2189px;height:5px;background:#dedede"></div>
<div class="a" style="left:835px;top:999px;width:2189px;height:82px;background:#fcfcfc"></div>
<div class="a" style="left:867px;top:999px;width:78px;height:82px;background:#fefefe"></div>
<div class="a" style="left:835px;top:1081px;width:2189px;height:2px;background:#e2e2e2"></div>
<div class="a" style="left:867px;top:1078px;width:78px;height:3px;background:#111"></div>
<span class="t" id="r_results" style="left:867.4px;top:1028.0px;font-size:24px;color:#171717;letter-spacing:-0.55px;">Results</span>
<span class="t" id="r_chart" style="left:977.0px;top:1028.0px;font-size:24px;color:#8a8a8a;letter-spacing:0.20px;">Chart</span>
<span class="t" id="r_export" style="left:1092.2px;top:1028.0px;font-size:24px;color:#171717;letter-spacing:0.21px;">Export</span>
<svg style="left:1185px;top:1035px" width="18" height="11" viewBox="0 0 18 11"><path d="M1.800 1.800l7.200 7.200l7.200-7.200" fill="none" stroke="#5a5a5a" stroke-width="2" stroke-linecap="round" stroke-linejoin="round"/></svg>
<div class="a" style="left:2108px;top:1015px;width:46px;height:51px;border:2px solid #d6d6d6;border-radius:10px;background:#fdfdfd"></div>
<div class="a" style="left:2128.6px;top:1029.8px;width:4.8px;height:4.8px;border-radius:50%;background:#333"></div>
<div class="a" style="left:2128.6px;top:1038.1999999999998px;width:4.8px;height:4.8px;border-radius:50%;background:#333"></div>
<div class="a" style="left:2128.6px;top:1046.6px;width:4.8px;height:4.8px;border-radius:50%;background:#333"></div>
<div class="a" style="left:2171px;top:1014px;width:128px;height:52px;border:2px solid #dadada;border-right:none;border-radius:26px 0 0 26px;background:#fcfcfc"></div>
<span class="t" id="r_source" style="left:2197.4px;top:1027.7px;font-size:24px;color:#5a5a5a;letter-spacing:-0.25px;">Source</span>
<div class="a" style="left:2297px;top:1014px;width:275px;height:52px;border:2px solid #d2d2d2;background:#fdfdfd"></div>
<span class="t" id="r_primary" style="left:2318.0px;top:1027.7px;font-size:24px;color:#171717;letter-spacing:-0.07px;">Primary Database</span>
<svg style="left:2531px;top:1035px" width="18" height="11" viewBox="0 0 18 11"><path d="M1.800 1.800l7.200 7.200l7.200-7.200" fill="none" stroke="#5a5a5a" stroke-width="2" stroke-linecap="round" stroke-linejoin="round"/></svg>
<div class="a" style="left:2570px;top:1014px;width:229px;height:52px;border:2px solid #d2d2d2;background:#fdfdfd"></div>
<span class="t" id="r_role" style="left:2591.0px;top:1027.7px;font-size:24px;color:#b0b0b0;letter-spacing:-0.56px;">Role</span>
<span class="t" id="r_pg" style="left:2646.4px;top:1027.7px;font-size:24px;color:#171717;letter-spacing:0.25px;">postgres</span>
<svg style="left:2753px;top:1036px" width="16" height="10" viewBox="0 0 16 10"><path d="M1.500 1.500l6.500 6.500l6.500-6.500" fill="none" stroke="#b8b8b8" stroke-width="1.800" stroke-linecap="round" stroke-linejoin="round"/></svg>
<div class="a" style="left:2797px;top:1014px;width:165px;height:52px;border:2px solid #62c58e;border-radius:0 11px 11px 0;background:#8fe2b1"></div>
<span class="t" id="r_run" style="left:2819.0px;top:1027.7px;font-size:24px;color:#171717;letter-spacing:-1.79px;">Run</span>
<svg style="left:2878px;top:1029px" width="24" height="24" viewBox="0 0 24 24"><path d="M8 8V5a3 3 0 1 0-3 3h14a3 3 0 1 0-3-3v14a3 3 0 1 0 3-3H5a3 3 0 1 0 3 3z" transform="translate(0.500 0.500) scale(0.960)" fill="none" stroke="#3f9a6c" stroke-width="1.800" stroke-linejoin="round"/></svg>
<svg style="left:2915px;top:1029px" width="23" height="23" viewBox="0 0 23 23"><path d="M20.500 2v8a4 4 0 0 1-4 4H2.500M8.500 8l-6 6l6 6" fill="none" stroke="#3f9a6c" stroke-width="1.900" stroke-linecap="round" stroke-linejoin="round"/></svg>
<div class="a" style="left:2994px;top:999px;width:2px;height:818px;background:#e8e8e8"></div>
<div class="a" style="left:3001px;top:1005px;width:16px;height:68px;border-radius:8px;background:#c1c1c1"></div>
<div class="a" style="left:3022px;top:999px;width:1px;height:818px;background:#efefef"></div>
<div class="a" style="left:835px;top:1083px;width:2159px;height:69px;background:#f3f3f3"></div>
<div class="a" style="left:835px;top:1153px;width:2159px;height:634px;background:#f8f8f8"></div>
<div class="a" style="left:835px;top:1153px;width:2159px;height:139px;background:#fcfcfc"></div>
<div class="a" style="left:835px;top:1151px;width:2159px;height:2px;background:#e2e2e2"></div>
<div class="a" style="left:835px;top:1221px;width:2159px;height:2px;background:#e9e9e9"></div>
<div class="a" style="left:835px;top:1291px;width:2159px;height:2px;background:#e9e9e9"></div>
<div class="a" style="left:835px;top:1786px;width:2159px;height:2px;background:#e6e6e6"></div>
<div class="a" style="left:1033px;top:1083px;width:2px;height:69px;background:#dddddd"></div>
<div class="a" style="left:1033px;top:1153px;width:2px;height:140px;background:#ebebeb"></div>
<div class="a" style="left:1396px;top:1083px;width:2px;height:69px;background:#dddddd"></div>
<div class="a" style="left:1396px;top:1153px;width:2px;height:140px;background:#ebebeb"></div>
<div class="a" style="left:1596px;top:1083px;width:2px;height:69px;background:#dddddd"></div>
<div class="a" style="left:1596px;top:1153px;width:2px;height:140px;background:#ebebeb"></div>
<div class="a" style="left:1796px;top:1083px;width:2px;height:69px;background:#dddddd"></div>
<div class="a" style="left:1796px;top:1153px;width:2px;height:140px;background:#ebebeb"></div>
<div class="a" style="left:2796px;top:1083px;width:2px;height:69px;background:#dddddd"></div>
<div class="a" style="left:2796px;top:1153px;width:2px;height:140px;background:#ebebeb"></div>
<div class="a" style="left:835px;top:1083px;width:198px;height:210px;overflow:hidden"><span class="cell hd" style="left:17px;top:23.8px">id</span><span class="cell" style="left:15.5px;top:93.8px">1</span><span class="cell" style="left:15.5px;top:163.8px">4</span></div>
<div class="a" style="left:1034px;top:1083px;width:362px;height:210px;overflow:hidden"><span class="cell hd" style="left:18px;top:23.8px">saved_on</span><span class="cell" style="left:16.5px;top:93.8px">2024-05-16 13:15:00+00</span><span class="cell" style="left:16.5px;top:163.8px">2024-05-16 13:20:00+00</span></div>
<div class="a" style="left:1397px;top:1083px;width:199px;height:210px;overflow:hidden"><span class="cell hd" style="left:18px;top:23.8px">patron_id</span><span class="cell" style="left:16.5px;top:93.8px">2</span><span class="cell" style="left:16.5px;top:163.8px">2</span></div>
<div class="a" style="left:1597px;top:1083px;width:199px;height:210px;overflow:hidden"><span class="cell hd" style="left:18px;top:23.8px">price</span><span class="cell" style="left:16.5px;top:93.8px">75000</span><span class="cell" style="left:16.5px;top:163.8px">58000</span></div>
<div class="a" style="left:1797px;top:1083px;width:999px;height:210px;overflow:hidden"><span class="cell hd" style="left:18px;top:23.8px">description</span><span class="cell" style="left:16.5px;top:93.8px">This exceptional Tesla Model S is in pristine condition with only 15,000 km</span><span class="cell" style="left:16.5px;top:163.8px">Excellent Tesla Model Y Performance in remarkable condition with 18,500 km</span></div>
<div class="a" style="left:2797px;top:1083px;width:196px;height:210px;overflow:hidden"><span class="cell hd" style="left:16px;top:23.8px">listed_on</span><span class="cell" style="left:16.5px;top:93.8px">2024-05-15 14:30:00+00</span><span class="cell" style="left:16.5px;top:163.8px">2024-05-25 20:00:00+00</span></div>
<div class="a" style="left:835px;top:1788px;width:2159px;height:28px;background:#fafafa"></div>
<div class="a" style="left:841px;top:1793px;width:1370px;height:16.5px;border-radius:9px;background:#c2c2c2"></div>
<div class="a" style="left:835px;top:1815px;width:2189px;height:2px;background:#e2e2e2"></div>
<div class="a" style="left:835px;top:1817px;width:2189px;height:71px;background:#fcfcfc"></div>
<span class="t" id="r_rows" style="left:850.2px;top:1840.9px;font-size:24px;color:#171717;letter-spacing:0.15px;">2 rows</span>

</div>
</body>
</html>
